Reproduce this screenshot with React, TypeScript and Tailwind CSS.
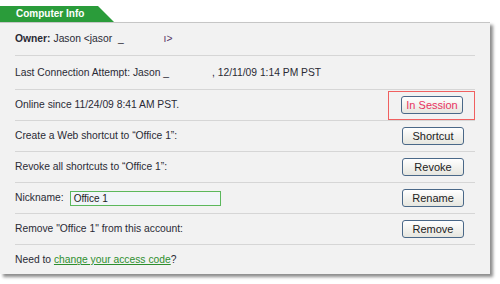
import React from "react";

const Btn = ({ label, red }: { label: string; red?: boolean }) => (
  <div
    className={`shrink-0 w-[87px] h-[29px] flex items-center justify-end pr-[11px] ${
      red ? "border border-[#f06060]" : ""
    }`}
  >
    <div
      className={`w-[62px] h-[18px] flex items-center justify-center rounded-[3px] border border-[#4a6888] bg-gradient-to-b from-white to-[#e6e6df] text-[11px] leading-none ${
        red ? "text-[#e8325f]" : "text-[#222]"
      }`}
    >
      {label}
    </div>
  </div>
);

export default function App() {
  return (
    <div
      className="w-[500px] h-[284px] bg-white relative overflow-hidden"
      style={{ fontFamily: '"Liberation Sans", Arial, sans-serif' }}
    >
      <div className="h-[22px] pt-[6px]">
        <div
          className="w-[114px] h-[16px] bg-[#2a9c3a] text-white font-bold text-[10px] leading-[16px] pl-[16px]"
          style={{ clipPath: "polygon(0 0, 98px 0, 114px 16px, 0 16px)" }}
        >
          Computer Info
        </div>
      </div>
      <div className="w-[490px] h-[252px] bg-[#f2f2f2] border-t border-[#c6c6c6] shadow-[3px_3px_3px_rgba(0,0,0,0.45)] px-[15px] text-[10.3px] text-[#2a2a35]">
        <div className="h-[33px] border-b border-[#d6d6d6] flex items-center">
          <span className="font-bold">Owner:</span>
          <span className="ml-[3px]">Jason &lt;jasor&nbsp;&nbsp;_</span>
          <span className="ml-[40px] text-[#553366]">ı&gt;</span>
        </div>
        <div className="h-[34px] border-b border-[#d6d6d6] flex items-center">
          <span>Last Connection Attempt: Jason _</span>
          <span className="ml-[43px]">, 12/11/09 1:14 PM PST</span>
        </div>
        <div className="h-[31px] border-b border-[#d6d6d6] flex items-center justify-between">
          <span>Online since 11/24/09 8:41 AM PST.</span>
          <Btn label="In Session" red />
        </div>
        <div className="h-[31px] border-b border-[#d6d6d6] flex items-center justify-between">
          <span>Create a Web shortcut to “Office 1”:</span>
          <Btn label="Shortcut" />
        </div>
        <div className="h-[31px] border-b border-[#d6d6d6] flex items-center justify-between">
          <span>Revoke all shortcuts to “Office 1”:</span>
          <Btn label="Revoke" />
        </div>
        <div className="h-[31px] border-b border-[#d6d6d6] flex items-center justify-between">
          <div className="flex items-center">
            <span>Nickname:</span>
            <div className="ml-[6px] w-[151px] h-[15px] border border-[#5cb85c] bg-[#f1f5f9] text-[10px] leading-[13px] pl-[3px] text-[#222]">
              Office 1
            </div>
          </div>
          <Btn label="Rename" />
        </div>
        <div className="h-[31px] border-b border-[#d6d6d6] flex items-center justify-between">
          <span>Remove "Office 1" from this account:</span>
          <Btn label="Remove" />
        </div>
        <div className="h-[30px] flex items-center">
          <span>Need to&nbsp;</span>
          <span className="text-[#2e8f2e] underline">change your access code</span>
          <span>?</span>
        </div>
      </div>
    </div>
  );
}
